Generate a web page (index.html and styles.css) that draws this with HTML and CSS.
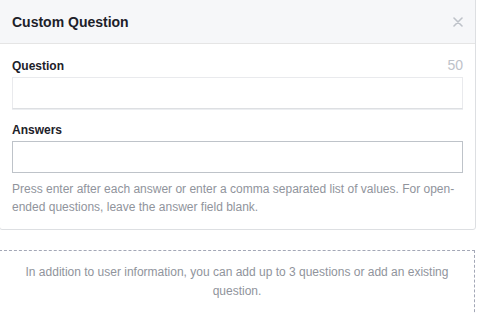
FILE: index.html
```html
<!DOCTYPE html>
<html lang="en">

<head>
  <meta charset="UTF-8" />
  <meta name="viewport" content="width=device-width, initial-scale=1.0" />
  <title>Custom Question</title>
  <link rel="stylesheet" href="styles.css">
</head>

<body>
  <div class="card">
    <div class="card-header">
      <h2 class="card-title">Custom Question</h2>
      <button type="button" class="close-btn" aria-label="Close">
        <svg width="10" height="10" viewBox="0 0 10 10">
          <path d="M1 1 L9 9 M9 1 L1 9" stroke="#bec2c9" stroke-width="1.6" stroke-linecap="round" fill="none" />
        </svg>
      </button>
    </div>
    <div class="card-body">
      <div class="label-row">
        <label for="question">Question</label>
        <span class="counter">50</span>
      </div>
      <input id="question" class="field field-light" type="text" name="question">

      <div class="label-row answers-row">
        <label for="answers">Answers</label>
      </div>
      <input id="answers" class="field" type="text" name="answers">

      <p class="help">Press enter after each answer or enter a comma separated list of values. For open-ended questions, leave the answer field blank.</p>
    </div>
  </div>

  <div class="add-box">
    In addition to user information, you can add up to 3 questions or add an existing question.
  </div>
</body>

</html>
```

FILE: styles.css
```css
* {
  box-sizing: border-box;
}

body {
  margin: 0;
  font-family: "Liberation Sans", Arial, Helvetica, sans-serif;
  font-size: 12px;
  color: #1d2129;
  background: #fff;
}

/* Dialog card, its left and top edges run off the screen */
.card {
  width: 477px;
  margin: -1px 0 0 -1px;
  border: 1px solid #dddfe2;
  border-radius: 0 0 3px 3px;
  background: #fff;
}

.card-header {
  height: 44px;
  display: flex;
  align-items: center;
  justify-content: space-between;
  padding: 0 12px 0 12px;
  background: #f6f7f9;
  border-bottom: 1px solid #e5e5e5;
}

.card-title {
  margin: 0;
  font-size: 14px;
  font-weight: bold;
  color: #1d2129;
}

.close-btn {
  display: flex;
  padding: 0;
  border: none;
  background: none;
  cursor: pointer;
}

.card-body {
  padding: 13px 12px 13px 12px;
}

.label-row {
  display: flex;
  align-items: baseline;
  justify-content: space-between;
  line-height: 16px;
  margin-bottom: 3px;
}

.label-row label {
  font-weight: bold;
  color: #1d2129;
}

.counter {
  font-size: 14px;
  color: #bec2c9;
}

.answers-row {
  margin-top: 13px;
}

.field {
  display: block;
  width: 100%;
  height: 32px;
  padding: 0 8px;
  border: 1px solid #bec3c9;
  font-family: inherit;
  font-size: 12px;
  background: #fff;
  outline: none;
}

.field-light {
  border-color: #e9eaed;
  border-bottom-color: #dddfe2;
  box-shadow: 0 1px 0 #eceef1;
}

.help {
  margin: 7px 0 0 0;
  line-height: 18px;
  color: #90949c;
}

/* Dashed drop area below the card */
.add-box {
  width: 476px;
  margin: 20px 0 0 -1px;
  padding: 12px 12px 20px 12px;
  border: 1px dashed #a3a7b6;
  text-align: center;
  line-height: 19px;
  color: #90949c;
}
```
